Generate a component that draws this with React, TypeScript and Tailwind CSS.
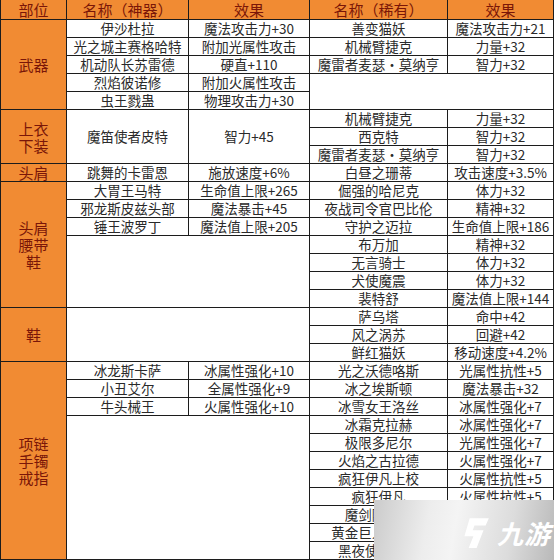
import React from "react";

type Cell = { r: number; span?: number; a?: string; b?: string; merged?: boolean };

// full class names (grid row index = data row + 1, header is row 1)
const ROW: string[] = [
  "row-start-1", "row-start-2", "row-start-3", "row-start-4", "row-start-5", "row-start-6",
  "row-start-7", "row-start-8", "row-start-9", "row-start-10", "row-start-11", "row-start-12",
  "row-start-13", "row-start-14", "row-start-15", "row-start-16", "row-start-17", "row-start-18",
  "row-start-19", "row-start-20", "row-start-21", "row-start-22", "row-start-23", "row-start-24",
  "row-start-25", "row-start-26", "row-start-27", "row-start-28", "row-start-29", "row-start-30",
  "row-start-31",
];
const SPAN: Record<number, string> = {
  1: "row-span-1",
  2: "row-span-2",
  3: "row-span-3",
  4: "row-span-4",
  5: "row-span-5",
  7: "row-span-7",
  8: "row-span-8",
  11: "row-span-11",
};
const COL: Record<number, string> = {
  1: "col-start-1",
  2: "col-start-2",
  3: "col-start-3",
  4: "col-start-4",
  5: "col-start-5",
};

const sections: { r: number; span: number; lines: string[] }[] = [
  { r: 1, span: 5, lines: ["武器"] },
  { r: 6, span: 3, lines: ["上衣", "下装"] },
  { r: 9, span: 1, lines: ["头肩"] },
  { r: 10, span: 7, lines: ["头肩", "腰带", "鞋"] },
  { r: 17, span: 3, lines: ["鞋"] },
  { r: 20, span: 11, lines: ["项链", "手镯", "戒指"] },
];

const left: Cell[] = [
  { r: 1, a: "伊沙杜拉", b: "魔法攻击力+30" },
  { r: 2, a: "光之城主赛格哈特", b: "附加光属性攻击" },
  { r: 3, a: "机动队长苏雷德", b: "硬直+110" },
  { r: 4, a: "烈焰彼诺修", b: "附加火属性攻击" },
  { r: 5, a: "虫王戮蛊", b: "物理攻击力+30" },
  { r: 6, span: 3, a: "魔笛使者皮特", b: "智力+45" },
  { r: 9, a: "跳舞的卡雷恩", b: "施放速度+6%" },
  { r: 10, a: "大胃王马特", b: "生命值上限+265" },
  { r: 11, a: "邪龙斯皮兹头部", b: "魔法暴击+45" },
  { r: 12, a: "锤王波罗丁", b: "魔法值上限+205" },
  { r: 13, span: 4, merged: true },
  { r: 17, span: 3, merged: true },
  { r: 20, a: "冰龙斯卡萨", b: "冰属性强化+10" },
  { r: 21, a: "小丑艾尔", b: "全属性强化+9" },
  { r: 22, a: "牛头械王", b: "火属性强化+10" },
  { r: 23, span: 8, merged: true },
];

const right: Cell[] = [
  { r: 1, a: "善变猫妖", b: "魔法攻击力+21" },
  { r: 2, a: "机械臂捷克", b: "力量+32" },
  { r: 3, a: "魔雷者麦瑟·莫纳亨", b: "智力+32" },
  { r: 4, span: 2, merged: true },
  { r: 6, a: "机械臂捷克", b: "力量+32" },
  { r: 7, a: "西克特", b: "智力+32" },
  { r: 8, a: "魔雷者麦瑟·莫纳亨", b: "智力+32" },
  { r: 9, a: "白昼之珊蒂", b: "攻击速度+3.5%" },
  { r: 10, a: "倔强的哈尼克", b: "体力+32" },
  { r: 11, a: "夜战司令官巴比伦", b: "精神+32" },
  { r: 12, a: "守护之迈拉", b: "生命值上限+186" },
  { r: 13, a: "布万加", b: "精神+32" },
  { r: 14, a: "无言骑士", b: "体力+32" },
  { r: 15, a: "犬使魔震", b: "体力+32" },
  { r: 16, a: "裴特舒", b: "魔法值上限+144" },
  { r: 17, a: "萨乌塔", b: "命中+42" },
  { r: 18, a: "风之涡苏", b: "回避+42" },
  { r: 19, a: "鲜红猫妖", b: "移动速度+4.2%" },
  { r: 20, a: "光之沃德咯斯", b: "光属性抗性+5" },
  { r: 21, a: "冰之埃斯顿", b: "魔法暴击+32" },
  { r: 22, a: "冰雪女王洛丝", b: "冰属性强化+7" },
  { r: 23, a: "冰霜克拉赫", b: "冰属性强化+7" },
  { r: 24, a: "极限多尼尔", b: "光属性强化+7" },
  { r: 25, a: "火焰之古拉德", b: "火属性强化+7" },
  { r: 26, a: "疯狂伊凡上校", b: "火属性抗性+5" },
  { r: 27, a: "疯狂伊凡", b: "火属性抗性+5" },
  { r: 28, a: "魔剑阿修罗", b: "暗属性强化+7" },
  { r: 29, a: "黄金巨人克洛诺", b: "力量+35" },
  { r: 30, a: "黑夜使者卡洛", b: "暗属性抗性+5" },
];

const cellText =
  "bg-white flex items-center justify-center whitespace-nowrap text-[13.5px] leading-[17px] text-[#2a2a2a]";

function Pair({ cells, col }: { cells: Cell[]; col: number }) {
  return (
    <>
      {cells.map((c) => {
        const rs = SPAN[c.span ?? 1];
        const row = ROW[c.r];
        if (c.merged) {
          return (
            <div key={`${col}-${c.r}`} className={`bg-white col-span-2 ${row} ${rs} ${COL[col]}`} />
          );
        }
        return (
          <React.Fragment key={`${col}-${c.r}`}>
            <div className={`${cellText} ${row} ${rs} ${COL[col]}`}>{c.a}</div>
            <div className={`${cellText} ${row} ${rs} ${COL[col + 1]}`}>{c.b}</div>
          </React.Fragment>
        );
      })}
    </>
  );
}

export default function App() {
  const headers = ["部位", "名称（神器）", "效果", "名称（稀有）", "效果"];
  return (
    <div className="relative w-[554px] h-[560px] bg-white overflow-hidden font-['Noto_Sans_CJK_SC','Noto_Sans',sans-serif]">
      <div className="grid grid-cols-[65px_121px_120px_137px_105px] grid-rows-[19px_repeat(30,17px)] gap-px bg-[#1c1c1c] pl-px pr-px pb-px w-[554px] h-[560px]">
        {headers.map((h, i) => (
          <div
            key={i}
            className={`bg-[#f18b33] flex items-center justify-center text-[15px] leading-[19px] text-[#7a1608] row-start-1 ${COL[i + 1]}`}
          >
            {h}
          </div>
        ))}
        {sections.map((s) => (
          <div
            key={s.r}
            className={`bg-[#f18b33] flex flex-col items-center justify-center text-[15px] leading-[17px] text-[#7a1608] col-start-1 ${ROW[s.r]} ${SPAN[s.span]}`}
          >
            {s.lines.map((l) => (
              <span key={l}>{l}</span>
            ))}
          </div>
        ))}
        <Pair cells={left} col={2} />
        <Pair cells={right} col={4} />
      </div>

      {/* watermark overlay */}
      <div className="absolute left-[374px] top-[500px] w-[180px] h-[60px] bg-[linear-gradient(100deg,#cbcbcb_0%,#ededed_30%,#f4f4f4_45%,#dcdcdc_75%,#b9b9b9_100%)] flex items-center justify-end pr-[3px] gap-[7px]">
        <svg width="30" height="34" viewBox="0 0 28 32" className="mt-[6px]">
          <path d="M9 2 L27 2 L24 9 L13.5 9 L11.8 13.5 L22 13.5 L15.5 30 L8 30 L12.5 19 L4 19 Z" fill="#ffffff" />
        </svg>
        <span className="text-white text-[26px] font-bold italic leading-none tracking-[1px] mt-[6px]">九游</span>
      </div>
    </div>
  );
}
